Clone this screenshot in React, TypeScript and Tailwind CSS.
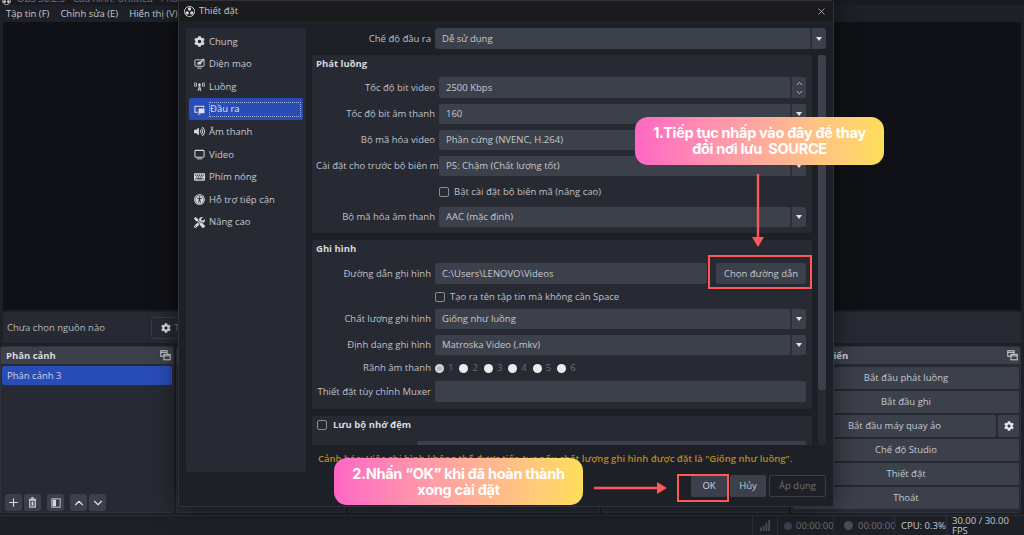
import React from "react";
import { ChevronUp, ChevronDown, Plus, X } from "lucide-react";
import { FaCog, FaVolumeUp, FaKeyboard, FaUniversalAccess, FaTools } from "react-icons/fa";

const ObsLogo = ({ size = 11 }: { size?: number }) => (
  <svg width={size} height={size} viewBox="0 0 24 24" fill="none">
    <circle cx="12" cy="12" r="11" stroke="#d6d7da" strokeWidth="2" />
    <circle cx="12" cy="6.5" r="3.6" fill="#d6d7da" />
    <circle cx="7" cy="15" r="3.6" fill="#d6d7da" />
    <circle cx="17" cy="15" r="3.6" fill="#d6d7da" />
  </svg>
);

const AppearanceIcon = () => (
  <svg viewBox="0 0 24 24" className="w-[11px] h-[11px]" fill="none">
    <rect x="2" y="4" width="20" height="14" rx="1.5" stroke="#d8d9dc" strokeWidth="2" />
    <path d="M7 14 L8 9 L15 7 L21 1 L23 3 L17 9 L15 14 Z" fill="#d8d9dc" />
    <path d="M7 22 H17" stroke="#d8d9dc" strokeWidth="2" />
  </svg>
);

const AntennaIcon = () => (
  <svg viewBox="0 0 24 24" className="w-[11px] h-[11px]" fill="none" stroke="#d8d9dc" strokeWidth="2">
    <circle cx="12" cy="8" r="2" fill="#d8d9dc" />
    <path d="M12 9 L9 22 M12 9 L15 22 M9.5 18 H14.5" />
    <path d="M6 4 Q4 8 6 12 M18 4 Q20 8 18 12 M2.5 3 Q0 8 2.5 13 M21.5 3 Q24 8 21.5 13" />
  </svg>
);

const OutputIcon = () => (
  <svg viewBox="0 0 24 24" className="w-[11px] h-[11px]" fill="none">
    <path d="M21 8 V5 H2 V18 H8" stroke="#e2e4ea" strokeWidth="2.2" />
    <rect x="10" y="10" width="13" height="10" rx="1" fill="#e2e4ea" />
    <path d="M8 22 H14" stroke="#e2e4ea" strokeWidth="2" />
  </svg>
);

const MonitorIcon = () => (
  <svg viewBox="0 0 24 24" className="w-[11px] h-[11px]" fill="none">
    <rect x="2" y="3" width="20" height="15" rx="2" stroke="#d8d9dc" strokeWidth="2.2" />
    <path d="M6 21.5 H18" stroke="#d8d9dc" strokeWidth="2" />
  </svg>
);

const DockCopyIcon = () => (
  <svg viewBox="0 0 14 14" className="w-[11px] h-[11px]" fill="none" stroke="#d8d9dc" strokeWidth="1.2">
    <rect x="1" y="1" width="8" height="7" />
    <path d="M1 3 H9" />
    <rect x="5" y="5.5" width="8" height="7" fill="#3c404b" />
    <path d="M5 7.5 H13" />
  </svg>
);

const SignalIcon = () => (
  <svg viewBox="0 0 12 12" className="w-[11px] h-[11px]" fill="#4b4e57">
    <rect x="0" y="8" width="2" height="4" />
    <rect x="3" y="6" width="2" height="6" />
    <rect x="6" y="3" width="2" height="9" />
    <rect x="9" y="0" width="2" height="12" />
  </svg>
);

const sidebarItems = [
  { label: "Chung", icon: <FaCog className="w-[11px] h-[11px] text-[#d8d9dc]" /> },
  { label: "Diện mạo", icon: <AppearanceIcon /> },
  { label: "Luồng", icon: <AntennaIcon /> },
  { label: "Đầu ra", icon: <OutputIcon />, active: true },
  { label: "Âm thanh", icon: <FaVolumeUp className="w-[11px] h-[11px] text-[#d8d9dc]" /> },
  { label: "Video", icon: <MonitorIcon /> },
  { label: "Phím nóng", icon: <FaKeyboard className="w-[12px] h-[12px] text-[#d8d9dc]" /> },
  { label: "Hỗ trợ tiếp cận", icon: <FaUniversalAccess className="w-[11px] h-[11px] text-[#d8d9dc]" /> },
  { label: "Nâng cao", icon: <FaTools className="w-[11px] h-[11px] text-[#d8d9dc]" /> },
];

const Caret = () => (
  <div className="w-[16px] h-full flex items-center justify-center border-l-2 border-[#2c2f38] shrink-0">
    <div className="w-0 h-0 border-l-[3.5px] border-r-[3.5px] border-t-[4px] border-l-transparent border-r-transparent border-t-[#e4e5e8]" />
  </div>
);

const Combo = ({ value, className = "" }: { value: string; className?: string }) => (
  <div className={`flex-1 h-[20px] bg-[#3c404b] rounded-[2px] flex items-center justify-between text-[#c6c8cd] ${className}`}>
    <span className="pl-[7px]">{value}</span>
    <Caret />
  </div>
);

const Spin = ({ value }: { value: string }) => (
  <div className="flex-1 h-[21px] bg-[#3c404b] rounded-[2px] flex items-center justify-between text-[#c6c8cd]">
    <span className="pl-[7px]">{value}</span>
    <div className="w-[16px] h-full flex flex-col items-center justify-center border-l-2 border-[#2c2f38] text-[#d8d9dc]">
      <ChevronUp size={9} strokeWidth={2} />
      <ChevronDown size={9} strokeWidth={2} />
    </div>
  </div>
);

const Row = ({ label, labelW, children }: { label: string; labelW: string; children: React.ReactNode }) => (
  <div className="flex items-center gap-[4px]">
    <div className={`${labelW} text-right text-[#bfc1c7] shrink-0 whitespace-nowrap`}>{label}</div>
    {children}
  </div>
);

const Check = ({ label }: { label: string }) => (
  <div className="flex items-center gap-[5px] text-[#bfc1c7]">
    <div className="w-[10px] h-[10px] border border-[#8a8c93] rounded-[2px]" />
    <span>{label}</span>
  </div>
);

const Dock = ({ title, className, children }: { title?: string; className: string; children?: React.ReactNode }) => (
  <div className={`${className} bg-[#272a33] rounded-[2px] border border-[#2f323b] flex flex-col`}>
    <div className="h-[17px] bg-[#3c404b] rounded-t-[2px] flex items-center justify-between pl-[5px] pr-[2px] shrink-0">
      <span className="font-bold text-[#d8d9dc]">{title}</span>
      <DockCopyIcon />
    </div>
    {children}
  </div>
);

const ToolBtn = ({ children, className = "" }: { children: React.ReactNode; className?: string }) => (
  <div className={`w-[17px] h-[17px] bg-[#3c404b] rounded-[3px] flex items-center justify-center text-[#e0e1e4] ${className}`}>{children}</div>
);

const ControlBtn = ({ label, className = "flex-1" }: { label: string; className?: string }) => (
  <div className={`${className} h-[22px] bg-[#3c404b] rounded-[2px] flex items-center justify-center text-[#c6c8cd]`}>{label}</div>
);

const Status = ({ children, className = "" }: { children: React.ReactNode; className?: string }) => (
  <div className={`h-full flex items-center border-l border-[#2c2f38] ${className}`}>{children}</div>
);

export default function App() {
  return (
    <div
      className="relative w-[1024px] h-[535px] overflow-hidden bg-[#1e2028] text-[9.5px] leading-none"
      style={{ fontFamily: '"Open Sans", "Noto Sans", sans-serif' }}
    >
      {/* main window behind the dialog */}
      <div className="h-full flex flex-col">
        <div className="h-[5px] overflow-hidden flex items-end gap-[6px] pl-[2px] bg-[#1a1b20] shrink-0">
          <ObsLogo size={9} />
          <span className="text-[#777a82] leading-[12px] whitespace-nowrap">OBS 30.2.3 - Cấu hình: Untitled - Phần cảnh: 3</span>
        </div>
        <div className="h-[17px] flex items-center gap-[11px] pl-[6px] text-[#c6c8cd] shrink-0 bg-[#1e2028]">
          <span>Tập tin (F)</span>
          <span>Chỉnh sửa (E)</span>
          <span>Hiển thị (V)</span>
          <span>Cảnh</span>
        </div>
        <div className="h-[288px] mx-[3px] bg-[#101116] shrink-0" />
        <div className="h-[31px] mt-[2px] mx-[3px] bg-[#272a33] rounded-[2px] flex items-center pl-[4px] gap-[46px] text-[#b6b8be] shrink-0">
          <span>Chưa chọn nguồn nào</span>
          <div className="h-[22px] w-[120px] border border-[#3a3d47] rounded-[3px] flex items-center gap-[3px] pl-[9px]">
            <FaCog className="w-[10px] h-[10px] text-[#d8d9dc]" />
            <span className="text-[#777a82]">Thuộc tính</span>
          </div>
        </div>
        <div className="h-[167px] mt-[3px] flex gap-[2px] shrink-0">
          <Dock title="Phân cảnh" className="w-[174px]">
            <div className="flex-1 flex flex-col justify-between px-[1px] pt-[2px]">
              <div className="h-[19px] bg-[#284cb8] rounded-[2px] flex items-center pl-[5px] text-[#cfd4e6]">Phân cảnh 3</div>
              <div className="flex items-center pl-[3px] pb-[1px]">
                <ToolBtn><Plus size={13} strokeWidth={2} /></ToolBtn>
                <ToolBtn className="ml-[2px]">
                  <svg viewBox="0 0 12 12" className="w-[11px] h-[11px]" fill="none" stroke="#d8d9dc" strokeWidth="1.2">
                    <path d="M2 2.5 H10 M4.5 1 H7.5" />
                    <rect x="3" y="3.5" width="6" height="7.5" />
                    <rect x="5" y="5" width="2" height="4.5" fill="#d8d9dc" stroke="none" />
                  </svg>
                </ToolBtn>
                <ToolBtn className="ml-[6px]">
                  <svg viewBox="0 0 12 12" className="w-[10px] h-[10px]">
                    <rect x="1" y="1" width="10" height="10" fill="none" stroke="#d8d9dc" strokeWidth="1" />
                    <rect x="2" y="2" width="4" height="8" fill="#d8d9dc" />
                  </svg>
                </ToolBtn>
                <ToolBtn className="ml-[6px]"><ChevronUp size={14} strokeWidth={2} /></ToolBtn>
                <ToolBtn className="ml-[2px]"><ChevronDown size={14} strokeWidth={2} /></ToolBtn>
              </div>
            </div>
          </Dock>
          <Dock className="w-[170px]" />
          <Dock className="w-[252px]" />
          <Dock className="w-[186px]" />
          <Dock title="Điều khiển" className="w-[230px] ml-[1px]">
            <div className="flex flex-col gap-[2px] pt-[3px] px-[1px]">
              <ControlBtn label="Bắt đầu phát luồng" className="w-full" />
              <ControlBtn label="Bắt đầu ghi" className="w-full" />
              <div className="flex gap-[2px]">
                <ControlBtn label="Bắt đầu máy quay ảo" />
                <div className="w-[21px] h-[22px] bg-[#3c404b] rounded-[2px] flex items-center justify-center">
                  <FaCog className="w-[10px] h-[10px] text-[#e6e7ea]" />
                </div>
              </div>
              <ControlBtn label="Chế độ Studio" className="w-full" />
              <ControlBtn label="Thiết đặt" className="w-full" />
              <ControlBtn label="Thoát" className="w-full" />
            </div>
          </Dock>
        </div>
        <div className="flex-1 mt-[2px] border-t border-[#2c2f38] flex items-center justify-end text-[#c6c8cd]">
          <Status className="w-[25px] justify-center"><SignalIcon /></Status>
          <Status className="w-[56px] gap-[4px] pl-[6px] text-[#6d7078]">
            <span className="w-[8px] h-[8px] rounded-full bg-[#3c404b] shrink-0" />
            <span>00:00:00</span>
          </Status>
          <Status className="w-[61px] gap-[5px] pl-[10px] text-[#6d7078]">
            <span className="w-[9px] h-[9px] rounded-full bg-[#4a4d56] shrink-0" />
            <span>00:00:00</span>
          </Status>
          <Status className="w-[52px] pl-[6px]">CPU: 0.3%</Status>
          <Status className="w-[78px] pl-[5px]">30.00 / 30.00 FPS</Status>
        </div>
      </div>

      {/* settings dialog */}
      <div className="absolute left-[178px] top-0 w-[656px] h-[507px] bg-[#1e2028] border border-[#2f323b] rounded-[3px] shadow-[0_0_26px_rgba(0,0,0,0.55)] flex flex-col">
        <div className="h-[20px] bg-[#1b1b1e] flex items-center justify-between pl-[5px] pr-[6px] shrink-0">
          <div className="flex items-center gap-[4px] text-[#c6c8cd]">
            <ObsLogo />
            <span>Thiết đặt</span>
          </div>
          <X size={11} strokeWidth={1.5} className="text-[#d8d9dc]" />
        </div>
        <div className="flex-1 flex pl-[7px] pr-[7px] pt-[7px] gap-[6px] min-h-0">
          <div className="w-[120px] h-[444px] bg-[#272a33] rounded-[2px] px-[3px] pt-[2px] shrink-0">
            {sidebarItems.map((item) => (
              <div
                key={item.label}
                className={`h-[22.6px] flex items-center gap-[4px] pl-[5px] rounded-[2px] ${item.active ? "bg-[#284cb8] text-[#e2e4ea]" : "text-[#c6c8cd]"}`}
              >
                <span className="w-[11px] flex justify-center shrink-0">{item.icon}</span>
                <span className={item.active ? "flex-1 h-[15px] flex items-center border border-dotted border-[#a8b4dc] mr-[2px]" : ""}>{item.label}</span>
              </div>
            ))}
          </div>
          <div className="flex-1 flex flex-col min-w-0">
            <Row label="Chế độ đầu ra" labelW="w-[119px]">
              <Combo value="Dễ sử dụng" className="!h-[21px] rounded-[3px]" />
            </Row>
            <div className="mt-[6px] flex gap-[6px] h-[390px]">
              <div className="w-[500px] flex flex-col gap-[7px] overflow-hidden">
                <div className="h-[178px] bg-[#272a33] rounded-[2px] shrink-0 px-[4px] pt-[4px] pr-[6px]">
                  <div className="h-[9px] font-bold text-[#d8d9dc] flex items-center">Phát luồng</div>
                  <div className="mt-[9px] flex flex-col gap-[6px]">
                    <Row label="Tốc độ bit video" labelW="w-[119px]"><Spin value="2500 Kbps" /></Row>
                    <Row label="Tốc độ bit âm thanh" labelW="w-[119px]"><Combo value="160" /></Row>
                    <Row label="Bộ mã hóa video" labelW="w-[119px]"><Combo value="Phần cứng (NVENC, H.264)" /></Row>
                    <Row label="Cài đặt cho trước bộ biên mã" labelW="w-[119px]"><Combo value="P5: Chậm (Chất lượng tốt)" /></Row>
                    <div className="pl-[123px] h-[19px] flex items-center"><Check label="Bật cài đặt bộ biên mã (nâng cao)" /></div>
                    <Row label="Bộ mã hóa âm thanh" labelW="w-[119px]"><Combo value="AAC (mặc định)" /></Row>
                  </div>
                </div>
                <div className="h-[169px] bg-[#272a33] rounded-[2px] shrink-0 px-[4px] pt-[4px] pr-[6px]">
                  <div className="h-[9px] font-bold text-[#d8d9dc] flex items-center">Ghi hình</div>
                  <div className="mt-[10px] flex flex-col gap-[6px]">
                    <Row label="Đường dẫn ghi hình" labelW="w-[115px]">
                      <div className="flex-1 h-[21px] bg-[#3c404b] rounded-[2px] flex items-center pl-[7px] text-[#c6c8cd]">C:\Users\LENOVO\Videos</div>
                      <div className="w-[90px] h-[21px] ml-[5px] bg-[#3c404b] rounded-[2px] flex items-center justify-center text-[#c6c8cd]">Chọn đường dẫn</div>
                    </Row>
                    <div className="pl-[119px] h-[13px] flex items-center"><Check label="Tạo ra tên tập tin mà không cần Space" /></div>
                    <Row label="Chất lượng ghi hình" labelW="w-[115px]"><Combo value="Giống như luồng" /></Row>
                    <Row label="Định dạng ghi hình" labelW="w-[115px]"><Combo value="Matroska Video (.mkv)" /></Row>
                    <Row label="Rãnh âm thanh" labelW="w-[115px]">
                      <div className="flex items-center gap-[6px] text-[#6d7078] h-[14px]">
                        {[1, 2, 3, 4, 5, 6].map((n) => (
                          <div key={n} className="flex items-center gap-[4px]">
                            <span className={`w-[9px] h-[9px] rounded-full ${n === 1 ? "bg-[#b8babf] border-2 border-[#d8d9dc]" : "bg-[#eceded]"}`} />
                            <span>{n}</span>
                          </div>
                        ))}
                      </div>
                    </Row>
                    <Row label="Thiết đặt tùy chỉnh Muxer" labelW="w-[115px]">
                      <div className="flex-1 h-[21px] bg-[#3c404b] rounded-[2px]" />
                    </Row>
                  </div>
                </div>
                <div className="h-[60px] bg-[#272a33] rounded-[2px] shrink-0 px-[5px] pt-[4px]">
                  <div className="flex items-center gap-[6px] font-bold text-[#d8d9dc]">
                    <div className="w-[10px] h-[10px] border border-[#8a8c93] rounded-[2px]" />
                    <span>Lưu bộ nhớ đệm</span>
                  </div>
                  <div className="mt-[11px] ml-[100px] mr-[1px] h-[20px] bg-[#3c404b] rounded-[2px]" />
                </div>
              </div>
              <div className="w-[8px] h-full bg-[#272a33] rounded-[2px]">
                <div className="h-[335px] bg-[#3c404b] rounded-[2px]" />
              </div>
            </div>
            <div className="mt-[9px] pl-[6px] font-semibold text-[#b98a14] whitespace-nowrap">
              Cảnh báo: Việc ghi hình không thể được tiếp tục nếu chất lượng ghi hình được đặt là "Giống như luồng".
            </div>
            <div className="mt-[11px] flex justify-end gap-[3px] items-center">
              <div className="w-[36px] h-[22px] bg-[#3c404b] rounded-[2px] flex items-center justify-center text-[#d8d9dc]">OK</div>
              <div className="w-[36px] h-[22px] bg-[#3c404b] rounded-[2px] flex items-center justify-center text-[#c6c8cd]">Hủy</div>
              <div className="w-[57px] h-[22px] border border-[#3c404b] rounded-[2px] flex items-center justify-center text-[#6d7078]">Áp dụng</div>
            </div>
          </div>
        </div>
      </div>

      {/* annotations */}
      <div
        className="absolute left-[635px] top-[117px] w-[249px] h-[48px] rounded-[13px] bg-gradient-to-r from-[#ff66c4] to-[#ffde59] flex flex-col items-center justify-center text-white font-bold text-[14.5px] leading-[16px] tracking-[-0.3px]"
        style={{ fontFamily: "Inter, sans-serif" }}
      >
        <span>1.Tiếp tục nhấp vào đây để thay</span>
        <span>đổi nơi lưu&nbsp; SOURCE</span>
      </div>
      <div
        className="absolute left-[334px] top-[458px] w-[249px] h-[47px] rounded-[13px] bg-gradient-to-r from-[#ff66c4] to-[#ffde59] flex flex-col items-center justify-center text-white font-bold text-[14.5px] leading-[16px] tracking-[-0.3px]"
        style={{ fontFamily: "Inter, sans-serif" }}
      >
        <span>2.Nhấn “OK” khi đã hoàn thành</span>
        <span>xong cài đặt</span>
      </div>
      <svg className="absolute left-[750px] top-[174px] w-[16px] h-[73px]" viewBox="0 0 16 73">
        <path d="M8 0 V63" stroke="#ff5757" strokeWidth="2.4" />
        <path d="M2 63 H14 L8 73 Z" fill="#ff5757" />
      </svg>
      <svg className="absolute left-[594px] top-[480px] w-[73px] h-[16px]" viewBox="0 0 73 16">
        <path d="M0 8 H63" stroke="#ff5757" strokeWidth="2.4" />
        <path d="M63 2 V14 L73 8 Z" fill="#ff5757" />
      </svg>
      <div className="absolute left-[708px] top-[255px] w-[104px] h-[34px] border-2 border-[#ff5757]" />
      <div className="absolute left-[677px] top-[474px] w-[52px] h-[28px] border-2 border-[#ff5757]" />
    </div>
  );
}
